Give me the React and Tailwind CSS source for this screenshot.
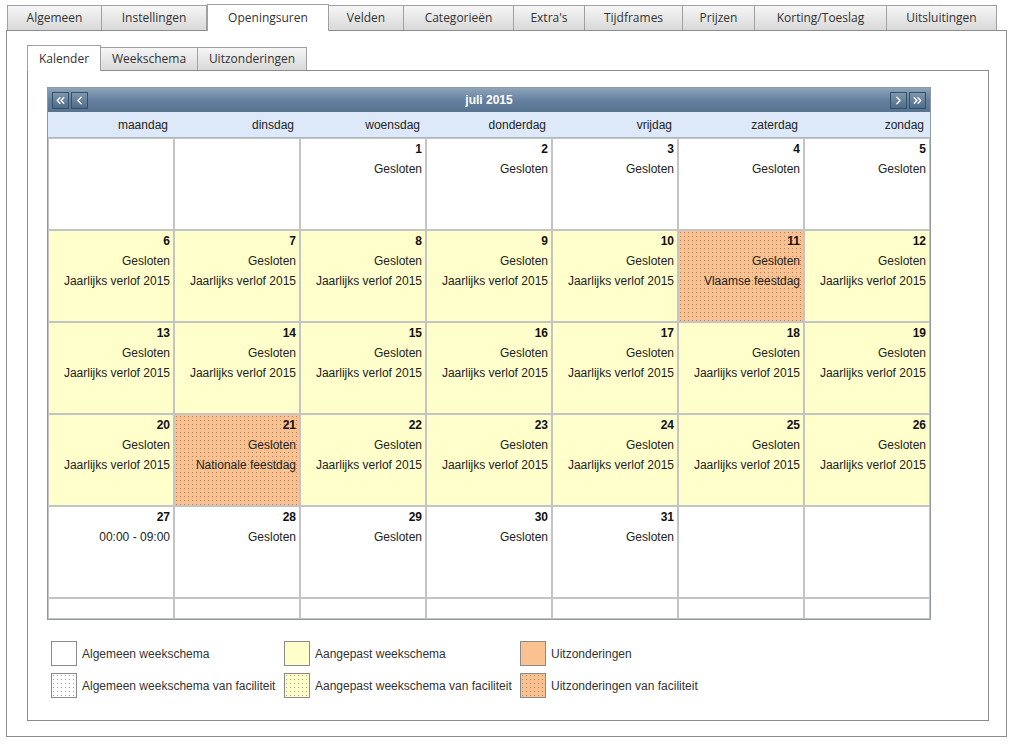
import { ChevronLeft, ChevronRight, ChevronsLeft, ChevronsRight } from "lucide-react";

const mainTabs = [
    { label: "Algemeen", w: "w-[95px]" },
    { label: "Instellingen", w: "w-[106px]" },
    { label: "Openingsuren", w: "w-[122px]", active: true },
    { label: "Velden", w: "w-[76px]" },
    { label: "Categorieën", w: "w-[111px]" },
    { label: "Extra's", w: "w-[72px]" },
    { label: "Tijdframes", w: "w-[99px]" },
    { label: "Prijzen", w: "w-[73px]" },
    { label: "Korting/Toeslag", w: "w-[133px]" },
    { label: "Uitsluitingen", w: "w-[111px]" },
];

const subTabs = [
    { label: "Kalender", w: "w-[74px]", active: true },
    { label: "Weekschema", w: "w-[98px]" },
    { label: "Uitzonderingen", w: "w-[110px]" },
];

const days = ["maandag", "dinsdag", "woensdag", "donderdag", "vrijdag", "zaterdag", "zondag"];

const verlof = (d) => ({ d, kind: "yellow", lines: ["Gesloten", "Jaarlijks verlof 2015"] });

const weeks = [
    [null, null, 1, 2, 3, 4, 5].map((d) => (d ? { d, kind: "white", lines: ["Gesloten"] } : null)),
    [6, 7, 8, 9, 10].map(verlof).concat([
        { d: 11, kind: "orange", lines: ["Gesloten", "Vlaamse feestdag"] },
        verlof(12),
    ]),
    [13, 14, 15, 16, 17, 18, 19].map(verlof),
    [
        verlof(20),
        { d: 21, kind: "orange", lines: ["Gesloten", "Nationale feestdag"] },
        ...[22, 23, 24, 25, 26].map(verlof),
    ],
    [
        { d: 27, kind: "white", lines: ["00:00 - 09:00"] },
        ...[28, 29, 30, 31].map((d) => ({ d, kind: "white", lines: ["Gesloten"] })),
        null,
        null,
    ],
];

const cellBg = {
    white: "bg-white",
    yellow: "bg-[#ffffcc]",
    orange: "bg-[#fac291] bg-[radial-gradient(circle_at_1.5px_1.5px,#b08060_0.5px,transparent_0.8px)] bg-[length:4px_4px]",
};

const NavButton = ({ children }) => (
    <button className="flex h-[17px] w-[17px] place-content-center place-items-center border border-[#34506a] bg-gradient-to-b from-[#7e97ad] to-[#4f6c87] text-white">
        {children}
    </button>
);

const Legend = ({ swatch, label }) => (
    <div className="flex h-[25px] place-items-center">
        <div className={`h-[25px] w-[26px] border border-[#8a8a8a] ${swatch}`}></div>
        <span className="ml-[5px] text-[12px] text-[#333]">{label}</span>
    </div>
);

const App = () => {
    return (
        <div className="h-[746px] w-[1014px] bg-white font-['Liberation_Sans',Arial,sans-serif] text-[12px] text-[#222]">
            {/* hoofdtabs */}
            <div className="flex h-[30px] place-items-end pl-[7px] font-['Open_Sans',sans-serif]">
                {mainTabs.map((t) =>
                    t.active ? (
                        <div
                            key={t.label}
                            className={`${t.w} relative z-10 -mb-px flex h-[27px] place-content-center place-items-center border border-b-0 border-[#a0a0a0] bg-white text-[12px] text-[#333]`}
                        >
                            {t.label}
                        </div>
                    ) : (
                        <div
                            key={t.label}
                            className={`${t.w} -ml-px flex h-[25px] place-content-center place-items-center border border-b-0 border-[#a0a0a0] bg-gradient-to-b from-[#f6f6f6] to-[#d9d9d9] text-[12px] text-[#333] first:ml-0`}
                        >
                            {t.label}
                        </div>
                    )
                )}
            </div>

            <div className="ml-[6px] h-[707px] w-[1001px] border border-[#8c8c8c] pl-[20px] pt-[13px]">
                {/* subtabs */}
                <div className="flex h-[26px] place-items-end font-['Open_Sans',sans-serif]">
                    {subTabs.map((t) =>
                        t.active ? (
                            <div
                                key={t.label}
                                className={`${t.w} relative z-10 -mb-px flex h-[26px] place-content-center place-items-center border border-b-0 border-[#a0a0a0] bg-white text-[12px] text-[#333]`}
                            >
                                {t.label}
                            </div>
                        ) : (
                            <div
                                key={t.label}
                                className={`${t.w} -ml-px flex h-[23px] place-content-center place-items-center border border-b-0 border-[#a0a0a0] bg-gradient-to-b from-[#f6f6f6] to-[#d9d9d9] text-[12px] text-[#333]`}
                            >
                                {t.label}
                            </div>
                        )
                    )}
                </div>

                <div className="h-[651px] w-[962px] border border-[#8c8c8c] pl-[19px] pt-[16px]">
                    {/* kalender */}
                    <div className="w-[884px] border border-[#8d9aa6]">
                        <div className="flex h-[24px] place-items-center bg-gradient-to-b from-[#8ea4b8] via-[#6580a0] to-[#58738e] px-[4px]">
                            <div className="flex gap-[2px]">
                                <NavButton>
                                    <ChevronsLeft size={13} strokeWidth={2.5} />
                                </NavButton>
                                <NavButton>
                                    <ChevronLeft size={13} strokeWidth={2.5} />
                                </NavButton>
                            </div>
                            <div className="flex-1 text-center text-[12px] font-bold text-white">juli 2015</div>
                            <div className="flex gap-[2px]">
                                <NavButton>
                                    <ChevronRight size={13} strokeWidth={2.5} />
                                </NavButton>
                                <NavButton>
                                    <ChevronsRight size={13} strokeWidth={2.5} />
                                </NavButton>
                            </div>
                        </div>
                        <div className="grid h-[26px] grid-cols-7 border-b border-[#a9b7c6] bg-[#dde9f8]">
                            {days.map((d) => (
                                <div key={d} className="flex place-content-end place-items-center pr-[6px] text-[12px] text-[#222]">
                                    {d}
                                </div>
                            ))}
                        </div>
                        {weeks.map((week, wi) => (
                            <div key={wi} className="grid grid-cols-7">
                                {week.map((c, ci) => (
                                    <div
                                        key={ci}
                                        className={`h-[92px] border border-[#c4c4c4] pr-[3px] text-right leading-[20px] ${c ? cellBg[c.kind] : "bg-white"}`}
                                    >
                                        {c && (
                                            <>
                                                <div className="font-bold text-[#111]">{c.d}</div>
                                                {c.lines.map((l) => (
                                                    <div key={l}>{l}</div>
                                                ))}
                                            </>
                                        )}
                                    </div>
                                ))}
                            </div>
                        ))}
                        <div className="grid grid-cols-7">
                            {days.map((d) => (
                                <div key={d} className="h-[21px] border border-[#c4c4c4] bg-white"></div>
                            ))}
                        </div>
                    </div>

                    {/* legenda */}
                    <div className="ml-[4px] mt-[21px] grid w-[720px] grid-cols-[233px_236px_1fr] gap-y-[7px]">
                        <Legend swatch="bg-white" label="Algemeen weekschema" />
                        <Legend swatch="bg-[#ffffcc]" label="Aangepast weekschema" />
                        <Legend swatch="bg-[#fac291]" label="Uitzonderingen" />
                        <Legend
                            swatch="bg-white bg-[radial-gradient(circle_at_1.5px_1.5px,#a0a0a0_0.5px,transparent_0.8px)] bg-[length:4px_4px]"
                            label="Algemeen weekschema van faciliteit"
                        />
                        <Legend
                            swatch="bg-[#ffffcc] bg-[radial-gradient(circle_at_1.5px_1.5px,#b0a870_0.5px,transparent_0.8px)] bg-[length:4px_4px]"
                            label="Aangepast weekschema van faciliteit"
                        />
                        <Legend
                            swatch="bg-[#fac291] bg-[radial-gradient(circle_at_1.5px_1.5px,#b08060_0.5px,transparent_0.8px)] bg-[length:4px_4px]"
                            label="Uitzonderingen van faciliteit"
                        />
                    </div>
                </div>
            </div>
        </div>
    );
};

export default App;
